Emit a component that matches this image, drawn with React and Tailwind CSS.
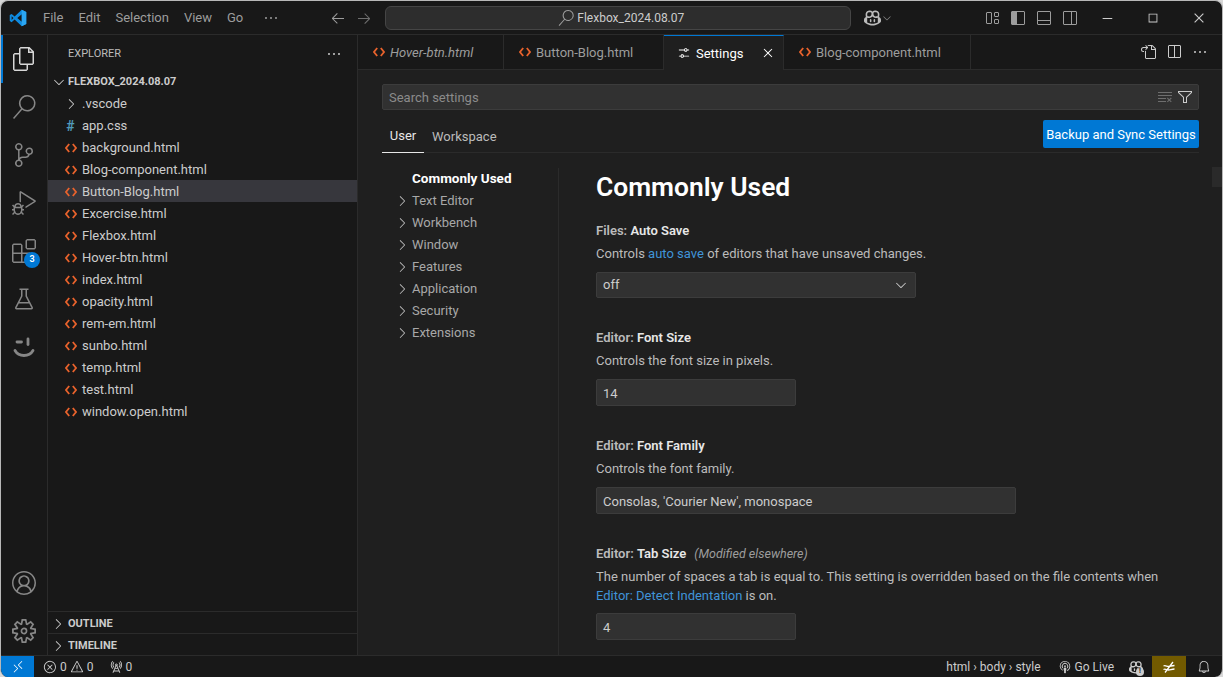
import React from "react";
import {
  VscFiles, VscSearch, VscSourceControl, VscDebugAlt, VscExtensions, VscBeaker, VscAccount, VscSettingsGear,
  VscChevronRight, VscChevronDown, VscEllipsis, VscSettings, VscClose, VscSplitHorizontal,
  VscLayoutSidebarLeft, VscLayoutPanelOff, VscLayoutSidebarRightOff, VscChromeMinimize, VscChromeMaximize,
  VscChromeClose, VscArrowLeft, VscArrowRight, VscCopilot, VscClearAll, VscFilter, VscError, VscWarning,
  VscRadioTower, VscBroadcast, VscBell, VscRemote, VscGoToFile, VscLayout,
} from "react-icons/vsc";

const files = [
  "background.html", "Blog-component.html", "Button-Blog.html", "Excercise.html", "Flexbox.html", "Hover-btn.html",
  "index.html", "opacity.html", "rem-em.html", "sunbo.html", "temp.html", "test.html", "window.open.html",
];
const tocItems = ["Text Editor", "Workbench", "Window", "Features", "Application", "Security", "Extensions"];

const SmileIcon = () => (
  <svg width="24" height="24" viewBox="0 0 24 24" fill="none" stroke="#868686" strokeWidth="2.8" strokeLinecap="round">
    <path d="M5 7h4.500" />
    <path d="M16 4v5.500" />
    <path d="M3 15.500c2 3.500 5.500 5 9 5s7-1.500 9-5" />
  </svg>
);

const VsLogo = () => (
  <svg width="18" height="18" viewBox="0 0 24 24">
    <path fill="#0f8be0" fillRule="evenodd" d="M17 1 23 4V20L17 23 7.500 14 3.500 17.500 1 16V8L3.500 6.500 7.500 10ZM17 7 11 12 17 17ZM3.500 9.500V14.500L6 12Z" />
    <path fill="#2ba6f2" d="M17 1 23 4V20L17 23Z" />
  </svg>
);

const NoFormatIcon = () => (
  <svg width="16" height="16" viewBox="0 0 16 16" fill="none" stroke="#fff" strokeWidth="1.3">
    <path d="M2.500 7c2-1 3 .5 5 .5s3-1 6-1M2.500 10.500c2-1 3 .5 5 .5s3-1 6-1M12 3 4 13.500" />
  </svg>
);

const HtmlIcon = ({ className }) => (
  <svg width="12" height="10" viewBox="0 0 12 10" fill="none" stroke="#e8622c" strokeWidth="1.8" className={className}>
    <path d="M4.200 1 1 5l3.200 4M7.800 1 11 5 7.800 9" />
  </svg>
);

const ActivityIcon = ({ children, active }) => (
  <div className={`relative flex h-12 w-[46px] items-center justify-center ${active ? "text-[#d7d7d7]" : "text-[#868686]"}`}>
    {active && <div className="absolute bottom-0 left-0 top-0 w-[2px] bg-[#0078d4]" />}
    {children}
  </div>
);

const FileRow = ({ name, selected }) => (
  <div className={`flex h-[22px] items-center pl-[17px] pt-[2px] ${selected ? "bg-[#37373d]" : ""}`}>
    <HtmlIcon className="mr-[5px]" />
    <span className="text-[13px] text-[#cccccc]">{name}</span>
  </div>
);

const Tab = ({ name, italic, width }) => (
  <div className={`flex h-full items-center border-r border-[#2b2b2b] pl-[15px] ${width}`}>
    <HtmlIcon className="mr-[5px]" />
    <span className={`pt-[1px] text-[13px] text-[#9d9d9d] ${italic ? "italic" : ""}`}>{name}</span>
  </div>
);

const Setting = ({ group, name, note, children }) => (
  <div>
    <div className="flex h-[18px] items-center text-[13px] font-semibold leading-[18px] text-[#bbbbbb]">
      {group}:&nbsp;<span className="text-[#e7e7e7]">{name}</span>
      {note && <span className="ml-[8px] text-[12.5px] font-normal italic text-[#9d9d9d]">{note}</span>}
    </div>
    {children}
  </div>
);

const Field = ({ value, width }) => (
  <div className={`flex h-[27px] items-center rounded-[2px] border border-[#3c3c3c] bg-[#313131] pl-[6px] pt-[2px] text-[13px] text-[#cccccc] ${width}`}>
    {value}
  </div>
);

export default function App() {
  return (
    <div className="h-[677px] w-[1223px] overflow-hidden bg-[#d8d8d8] font-['Roboto',sans-serif]">
      <div className="flex h-full flex-col overflow-hidden rounded-lg border-t border-l border-r border-[#b8b8b8] bg-[#181818]">
        {/* title bar */}
        <div className="flex h-[34px] shrink-0 items-center border-b border-[#2b2b2b]">
          <div className="flex w-[34px] justify-center"><VsLogo /></div>
          <div className="flex items-center gap-[15px] pl-[8px] pt-[1px] text-[13px] text-[#9d9d9d]">
            <span>File</span><span>Edit</span><span>Selection</span><span>View</span><span>Go</span>
            <VscEllipsis size={16} className="ml-[5px]" />
          </div>
          <div className="ml-[51px] flex items-center gap-[10px] text-[#9d9d9d]">
            <VscArrowLeft size={16} /><VscArrowRight size={16} className="text-[#6e6e6e]" />
          </div>
          <div className="ml-[13px] flex h-[24px] w-[466px] items-center justify-center gap-[3px] rounded-md border border-[#454545] bg-[#2d2d2d] pl-[6px] text-[12px] text-[#cccccc]">
            <VscSearch size={16} className="text-[#9d9d9d]" />
            Flexbox_2024.08.07
          </div>
          <div className="ml-[13px] flex items-center text-[#bbbbbb]">
            <VscCopilot size={17} /><VscChevronDown size={12} className="text-[#868686]" />
          </div>
          <div className="ml-auto flex items-center gap-[10px] pr-[6px] text-[#9d9d9d]">
            <VscLayout size={16} /><VscLayoutSidebarLeft size={16} /><VscLayoutPanelOff size={16} /><VscLayoutSidebarRightOff size={16} />
          </div>
          <div className="flex items-center text-[#cccccc]">
            <div className="flex w-[46px] justify-center"><VscChromeMinimize size={14} /></div>
            <div className="flex w-[46px] justify-center"><VscChromeMaximize size={14} /></div>
            <div className="flex w-[46px] justify-center"><VscChromeClose size={14} /></div>
          </div>
        </div>

        <div className="flex min-h-0 flex-1">
          {/* activity bar */}
          <div className="flex w-[47px] shrink-0 flex-col border-r border-[#2b2b2b]">
            <ActivityIcon active><VscFiles size={24} /></ActivityIcon>
            <ActivityIcon><VscSearch size={24} /></ActivityIcon>
            <ActivityIcon><VscSourceControl size={24} /></ActivityIcon>
            <ActivityIcon><VscDebugAlt size={24} /></ActivityIcon>
            <ActivityIcon>
              <VscExtensions size={24} />
              <span className="absolute left-[23px] top-[25px] flex h-4 w-4 items-center justify-center rounded-full bg-[#0078d4] text-[9px] font-semibold text-white">3</span>
            </ActivityIcon>
            <ActivityIcon><VscBeaker size={24} /></ActivityIcon>
            <ActivityIcon><SmileIcon /></ActivityIcon>
            <div className="mt-auto">
              <ActivityIcon><VscAccount size={24} /></ActivityIcon>
              <ActivityIcon><VscSettingsGear size={24} /></ActivityIcon>
            </div>
          </div>

          {/* sidebar */}
          <div className="flex w-[310px] shrink-0 flex-col border-r border-[#2b2b2b]">
            <div className="flex h-[35px] shrink-0 items-center justify-between pl-[20px] pr-[15px] pt-[3px] text-[11px] text-[#bbbbbb]">
              EXPLORER <VscEllipsis size={16} className="text-[#cccccc]" />
            </div>
            <div className="flex h-[22px] items-center pl-[3px] pt-[2px] text-[11px] font-bold text-[#cccccc]">
              <VscChevronDown size={16} className="mr-[1px]" />FLEXBOX_2024.08.07
            </div>
            <div className="flex h-[22px] items-center pl-[15px] pt-[2px] text-[13px] text-[#cccccc]">
              <VscChevronRight size={16} className="mr-[3px]" />.vscode
            </div>
            <div className="flex h-[22px] items-center pl-[17px] pt-[2px] text-[13px] text-[#cccccc]">
              <span className="mr-[6px] w-[11px] text-center text-[14px] font-bold leading-none text-[#519aba]">#</span>app.css
            </div>
            {files.map((f) => <FileRow key={f} name={f} selected={f === "Button-Blog.html"} />)}
            <div className="mt-auto flex h-[22px] items-center border-t border-[#2b2b2b] pl-[2px] pt-[3px] text-[11px] font-bold text-[#cccccc]">
              <VscChevronRight size={16} className="mr-[2px]" />OUTLINE
            </div>
            <div className="flex h-[22px] items-center border-t border-[#2b2b2b] pl-[2px] pt-[3px] text-[11px] font-bold text-[#cccccc]">
              <VscChevronRight size={16} className="mr-[2px]" />TIMELINE
            </div>
          </div>

          {/* editor */}
          <div className="flex min-w-0 flex-1 flex-col bg-[#1f1f1f]">
            <div className="flex h-[35px] shrink-0 items-center border-b border-[#2b2b2b] bg-[#181818]">
              <Tab name="Hover-btn.html" italic width="w-[146px]" />
              <Tab name="Button-Blog.html" width="w-[160px]" />
              <div className="-mb-px flex h-[35px] w-[120px] items-center border-r border-t border-[#2b2b2b] border-t-[#0078d4] bg-[#1f1f1f] pl-[13px] text-[13px] text-white">
                <VscSettings size={14} className="mr-[5px]" /><span className="pt-[1px]">Settings</span>
                <VscClose size={16} className="ml-auto mr-[7px]" />
              </div>
              <Tab name="Blog-component.html" width="w-[187px]" />
              <div className="ml-auto flex items-center gap-[10px] pr-[14px] text-[#cccccc]">
                <VscGoToFile size={16} /><VscSplitHorizontal size={16} /><VscEllipsis size={16} />
              </div>
            </div>

            <div className="relative min-h-0 flex-1 overflow-hidden pl-[24px] pr-[23px] pt-[14px]">
              <div className="absolute right-0 top-[97px] h-[20px] w-[10px] bg-[#2a2a2a]" />
              <div className="flex h-[26px] items-center justify-between rounded-[2px] border border-[#3c3c3c] bg-[#313131] pl-[6px] pr-[5px] text-[13px] text-[#8b8b8b]">
                <span className="pt-[1px]">Search settings</span>
                <span className="flex items-center gap-[4px]">
                  <VscClearAll size={16} className="text-[#6e6e6e]" />
                  <VscFilter size={16} className="text-[#cccccc]" />
                </span>
              </div>
              <div className="mt-[10px] flex h-[33px] items-start justify-between border-b border-[#2b2b2b]">
                <div className="flex h-[33px] text-[13px]">
                  <div className="flex h-[33px] w-[42px] items-center justify-center border-b border-[#e7e7e7] text-[#e7e7e7]">User</div>
                  <div className="flex h-[33px] items-center pl-[8px] text-[#bbbbbb]">Workspace</div>
                </div>
                <div className="flex h-[28px] w-[156px] items-center justify-center rounded-[2px] bg-[#0078d4] pt-[1px] text-[13px] text-white">
                  Backup and Sync Settings
                </div>
              </div>

              <div className="mt-[15px] flex">
                <div className="h-[500px] w-[177px] shrink-0 border-r border-[#2b2b2b] pl-[14px]">
                  <div className="flex h-[22px] items-center pb-[2px] pl-[16px] text-[13.5px] font-bold text-white">Commonly Used</div>
                  {tocItems.map((t) => (
                    <div key={t} className="flex h-[22px] items-center text-[13px] text-[#a8a8a8]">
                      <VscChevronRight size={16} className="-ml-[2px] mr-[2px] text-[#bbbbbb]" />{t}
                    </div>
                  ))}
                </div>
                <div className="min-w-0 flex-1 pl-[37px]">
                  <h1 className="mb-[17px] mt-[1px] h-[36px] text-[26.4px] font-semibold leading-[36px] text-white">Commonly Used</h1>
                  <Setting group="Files" name="Auto Save">
                    <p className="mt-[4px] text-[13px] leading-[19px] text-[#bbbbbb]">
                      Controls <span className="text-[#4094d8]">auto save</span> of editors that have unsaved changes.
                    </p>
                    <div className="mt-[9px] flex h-[26px] w-[320px] items-center justify-between rounded-[2px] border border-[#3c3c3c] bg-[#313131] pl-[6px] pr-[6px] text-[13px] text-[#cccccc]">
                      off <VscChevronDown size={16} />
                    </div>
                  </Setting>
                  <div className="mt-[31px]">
                    <Setting group="Editor" name="Font Size">
                      <p className="mt-[4px] text-[13px] leading-[19px] text-[#bbbbbb]">Controls the font size in pixels.</p>
                      <div className="mt-[9px]"><Field value="14" width="w-[200px]" /></div>
                    </Setting>
                  </div>
                  <div className="mt-[31px]">
                    <Setting group="Editor" name="Font Family">
                      <p className="mt-[4px] text-[13px] leading-[19px] text-[#bbbbbb]">Controls the font family.</p>
                      <div className="mt-[9px]"><Field value="Consolas, 'Courier New', monospace" width="w-[420px]" /></div>
                    </Setting>
                  </div>
                  <div className="mt-[31px]">
                    <Setting group="Editor" name="Tab Size" note="(Modified elsewhere)">
                      <p className="mt-[4px] text-[13px] leading-[19px] text-[#bbbbbb]">
                        The number of spaces a tab is equal to. This setting is overridden based on the file contents when
                        <br />
                        <span className="text-[#4094d8]">Editor: Detect Indentation</span> is on.
                      </p>
                      <div className="mt-[8px]"><Field value="4" width="w-[200px]" /></div>
                    </Setting>
                  </div>
                </div>
              </div>
            </div>
          </div>
        </div>

        {/* status bar */}
        <div className="flex h-[22px] shrink-0 items-center border-t border-[#2b2b2b] text-[12px] text-[#cccccc]">
          <div className="flex h-full w-[33px] items-center justify-center bg-[#0078d4] text-white"><VscRemote size={14} /></div>
          <div className="flex items-center pl-[9px]">
            <VscError size={14} className="mr-[3px]" />0
            <VscWarning size={14} className="ml-[3px] mr-[3px]" />0
            <VscRadioTower size={14} className="ml-[15px] mr-[3px]" />0
          </div>
          <div className="ml-auto flex h-full items-center">
            <span className="mr-[17px]">html › body › style</span>
            <VscBroadcast size={14} className="mr-[3px]" />
            <span className="mr-[15px]">Go Live</span>
            <div className="relative mr-[9px]">
              <VscCopilot size={14} />
              <span className="absolute -bottom-[2px] -right-[1px] flex h-[8px] w-[8px] items-center justify-center rounded-full bg-[#cccccc] text-[7px] font-bold leading-none text-[#181818]">!</span>
            </div>
            <div className="flex h-full w-[34px] items-center justify-center bg-[#725a00]"><NoFormatIcon /></div>
            <div className="flex w-[36px] justify-center"><VscBell size={14} /></div>
          </div>
        </div>
      </div>
    </div>
  );
}
